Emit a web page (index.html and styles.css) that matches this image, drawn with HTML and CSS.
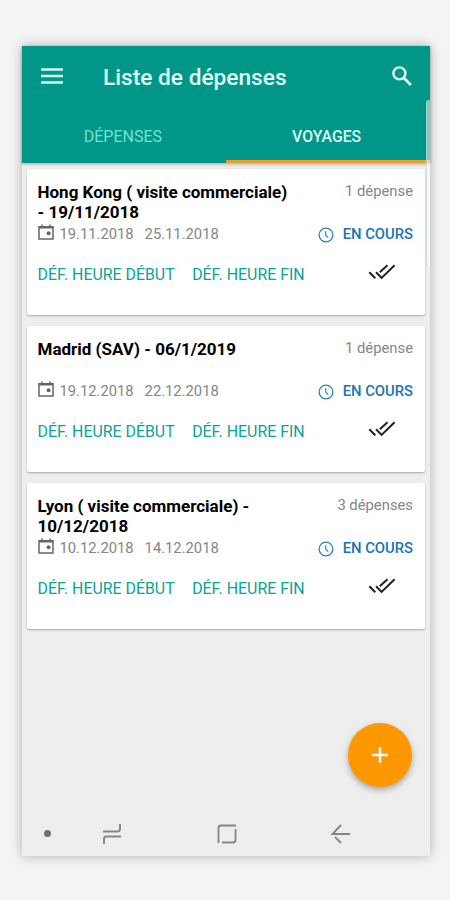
FILE: index.html
```html
<!DOCTYPE html>
<html lang="fr">
<head>
  <meta charset="UTF-8" />
  <meta name="viewport" content="width=device-width, initial-scale=1.0"/>
  <title>Liste de dépenses</title>
  <link rel="stylesheet" href="styles.css">
</head>
<body>
  <!-- shared icons -->
  <svg class="sprite">
    <symbol id="icon-calendar" viewBox="0 0 16 16">
      <path d="M1 2.7h14v12.3H1zM1 3.7h14M4 .4v2.4M12 .4v2.4" fill="none" stroke="#666" stroke-width="1.5"/>
      <circle cx="10.6" cy="9.2" r="2" fill="#666"/>
    </symbol>
    <symbol id="icon-clock" viewBox="0 0 16 16">
      <circle cx="8" cy="8" r="6.9" fill="none" stroke="#2980b5" stroke-width="1.3"/>
      <path d="M7.7 4.2v4l2.6 2.5" fill="none" stroke="#2980b5" stroke-width="1.1"/>
    </symbol>
    <symbol id="icon-checks" viewBox="0 0 28 16">
      <path d="M1.300 8.300l6 6M8 8.300l5.600 5.600L26.600 1.200M11.800 8.300L19.500 1.200" fill="none" stroke="#222" stroke-width="2"/>
    </symbol>
  </svg>

  <div class="phone">
    <header class="header">
      <div class="toolbar">
        <svg class="menu-icon" viewBox="0 0 22 16"><path d="M0 1.500h22M0 8h22M0 14.500h22" stroke="#d9fbf5" stroke-width="2.4"/></svg>
        <h1 class="title">Liste de dépenses</h1>
        <svg class="search-icon" viewBox="0 0 20 20"><circle cx="7.4" cy="7.4" r="6" fill="none" stroke="#e2fbf7" stroke-width="2.4"/><path d="M11.700 11.700l7.200 7.200" stroke="#e2fbf7" stroke-width="2.8"/></svg>
      </div>
      <nav class="tabs">
        <a class="tab">DÉPENSES</a>
        <a class="tab active">VOYAGES</a>
      </nav>
    </header>

    <main class="list">
      <section class="card">
        <div class="card-top">
          <h2 class="card-title">Hong Kong ( visite commerciale) - 19/11/2018</h2>
          <span class="count">1 dépense</span>
        </div>
        <div class="card-meta">
          <svg class="calendar"><use href="#icon-calendar"/></svg>
          <span class="date">19.11.2018</span>
          <span class="date">25.11.2018</span>
          <svg class="clock"><use href="#icon-clock"/></svg>
          <span class="status">EN COURS</span>
        </div>
        <div class="card-actions">
          <a class="action">DÉF. HEURE DÉBUT</a>
          <a class="action">DÉF. HEURE FIN</a>
          <svg class="checks"><use href="#icon-checks"/></svg>
        </div>
      </section>

      <section class="card">
        <div class="card-top">
          <h2 class="card-title">Madrid (SAV) - 06/1/2019</h2>
          <span class="count">1 dépense</span>
        </div>
        <div class="card-meta">
          <svg class="calendar"><use href="#icon-calendar"/></svg>
          <span class="date">19.12.2018</span>
          <span class="date">22.12.2018</span>
          <svg class="clock"><use href="#icon-clock"/></svg>
          <span class="status">EN COURS</span>
        </div>
        <div class="card-actions">
          <a class="action">DÉF. HEURE DÉBUT</a>
          <a class="action">DÉF. HEURE FIN</a>
          <svg class="checks"><use href="#icon-checks"/></svg>
        </div>
      </section>

      <section class="card">
        <div class="card-top">
          <h2 class="card-title">Lyon ( visite commerciale) - 10/12/2018</h2>
          <span class="count">3 dépenses</span>
        </div>
        <div class="card-meta">
          <svg class="calendar"><use href="#icon-calendar"/></svg>
          <span class="date">10.12.2018</span>
          <span class="date">14.12.2018</span>
          <svg class="clock"><use href="#icon-clock"/></svg>
          <span class="status">EN COURS</span>
        </div>
        <div class="card-actions">
          <a class="action">DÉF. HEURE DÉBUT</a>
          <a class="action">DÉF. HEURE FIN</a>
          <svg class="checks"><use href="#icon-checks"/></svg>
        </div>
      </section>
    </main>

    <button class="fab" aria-label="Ajouter">
      <svg class="plus" viewBox="0 0 16 16"><path d="M8 0v16M0 8h16" stroke="#fff" stroke-width="2.4"/></svg>
    </button>
    <div class="edge-handle"></div>

    <footer class="navbar">
      <span class="dot"></span>
      <svg class="recents" viewBox="0 0 20 22"><path d="M1 8.500h14.500q2.500 0 2.500-2.500V1M19 13.500H4.500Q2 13.500 2 16v5" fill="none" stroke="#858585" stroke-width="1.9"/></svg>
      <svg class="home" viewBox="0 0 20 20"><path d="M1.500 19V4q0-2.500 2.500-2.500h15M18.500 5v11q0 2.500-2.500 2.500H5" fill="none" stroke="#858585" stroke-width="1.8"/></svg>
      <svg class="back" viewBox="0 0 20 20"><path d="M10 1L1.500 10H19M4 12.800L10 19" fill="none" stroke="#858585" stroke-width="1.9"/></svg>
    </footer>
  </div>
</body>
</html>
```

FILE: styles.css
```css
* { margin: 0; padding: 0; box-sizing: border-box; }
body {
  font-family: Roboto, sans-serif;
  background: #f4f4f4;
  height: 900px;
  padding: 45.5px 20.5px 0 22px;
  overflow: hidden;
}
.sprite { display: none; }
.phone {
  position: relative;
  display: flex;
  flex-direction: column;
  height: 810.5px;
  background: #eee;
  box-shadow: 0 0 11px rgba(0, 0, 0, 0.28);
}

.header {
  height: 117px;
  background: #009788;
  box-shadow: 0 1px 3px rgba(0, 0, 0, 0.3);
}
.toolbar {
  display: flex;
  align-items: center;
  height: 61px;
  padding: 0 17.5px 0 19px;
}
.menu-icon { width: 22px; height: 16px; }
.title {
  flex: 1;
  margin: 2px 0 0 40px;
  font-size: 22.7px;
  font-weight: 500;
  color: #e2fbf7;
}
.search-icon { width: 20px; height: 20px; }
.tabs {
  display: flex;
  height: 56px;
}
.tab {
  flex: 1;
  padding: 20px 2px 0 0;
  font-size: 16px;
  line-height: 20px;
  text-align: center;
  color: #6fe3d3;
}
.tab.active {
  color: #d9fbf5;
  font-size: 15.8px;
  font-weight: 500;
  border-bottom: 3px solid #e9a12c;
}

.list {
  flex: 1;
  display: flex;
  flex-direction: column;
  gap: 11px;
  padding: 6.5px 5px 0 4.5px;
}
.card {
  height: 146px;
  padding: 13px 11.5px 0 11px;
  background: #fff;
  border-radius: 2px;
  box-shadow: 0 1px 2px rgba(0, 0, 0, 0.3);
}
.card-top {
  display: flex;
  justify-content: space-between;
  height: 41px;
}
.card-title {
  width: 258px;
  font-size: 17px;
  font-weight: 700;
  line-height: 20px;
  color: #000;
}
.count {
  padding-top: 1px;
  font-size: 14.8px;
  line-height: 17px;
  color: #858585;
}
.card-meta {
  display: flex;
  align-items: center;
  height: 22px;
}
.calendar {
  width: 16px;
  height: 16px;
  margin: -4px 6px 0 0;
}
.date {
  margin-right: 11px;
  font-size: 14.75px;
  color: #858585;
}
.clock {
  width: 16px;
  height: 16px;
  margin: 1px 9px 0 auto;
}
.status {
  font-size: 14.8px;
  font-weight: 500;
  color: #1b76ae;
}
.card-actions {
  display: flex;
  align-items: center;
  height: 20px;
  margin-top: 19px;
}
.action {
  margin-right: 17.5px;
  font-size: 15.9px;
  color: #0ba393;
}
.checks {
  width: 28px;
  height: 16px;
  margin: -4px 17.5px 0 auto;
}

.fab {
  position: absolute;
  right: 17.5px;
  bottom: 69px;
  display: flex;
  align-items: center;
  justify-content: center;
  width: 64px;
  height: 64px;
  border: none;
  border-radius: 50%;
  background: #ff9800;
  box-shadow: 0 3px 6px rgba(0, 0, 0, 0.3);
}
.plus { width: 16px; height: 16px; }
.edge-handle {
  position: absolute;
  top: 54px;
  right: 0;
  width: 4px;
  height: 167px;
  border-left: 1px solid rgba(190, 215, 215, 0.7);
  border-radius: 3px 0 0 3px;
  background: rgba(255, 255, 255, 0.5);
}

.navbar {
  display: flex;
  align-items: center;
  height: 45px;
  padding-left: 21.5px;
}
.dot {
  width: 7px;
  height: 7px;
  border-radius: 50%;
  background: #707070;
}
.recents { width: 20px; height: 22px; margin-left: 51.5px; }
.home { width: 20px; height: 20px; margin-left: 95px; }
.back { width: 20px; height: 20px; margin-left: 94px; }
```
